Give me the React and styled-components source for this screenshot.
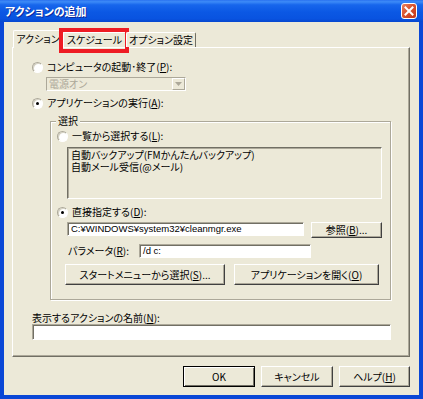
import styled, { createGlobalStyle } from 'styled-components';

const GlobalStyle = createGlobalStyle`
  html, body { margin: 0; padding: 0; }
  body {
    background: #ece9d8;
    font-family: "Noto Sans CJK JP", "Noto Sans", sans-serif;
    font-size: 10px;
    font-feature-settings: "palt";
    color: #000;
  }
  * { box-sizing: border-box; }
`;

function Radio({ checked, children, gap }) {
  return (
    <RadioRow $gap={gap}>
      <RadioMark $checked={checked} />
      <span>{children}</span>
    </RadioRow>
  );
}

export default function App() {
  return (
    <Window>
      <GlobalStyle />
      <TitleBar>
        <Title>アクションの追加</Title>
        <CloseButton>
          <svg width='10' height='10' viewBox='0 0 10 10'>
            <path d='M1.5 1.5 L8.5 8.5 M8.5 1.5 L1.5 8.5' stroke='#fff' strokeWidth='2' strokeLinecap='square' />
          </svg>
        </CloseButton>
      </TitleBar>

      <Body>
        <TabStrip>
          <Tab $active $w={50}>アクション</Tab>
          <Tab $w={63} $highlight>スケジュール</Tab>
          <Tab $w={70}>オプション設定</Tab>
        </TabStrip>

        <Panel>
          <Radio>
            コンピュータの起動･終了(<u>P</u>):
          </Radio>
          <ComboBox>
            <span>電源オン</span>
            <ComboButton>
              <svg width='7' height='4' viewBox='0 0 7 4'>
                <path d='M0 0 H7 L3.5 4 Z' fill='#aca899' />
              </svg>
            </ComboButton>
          </ComboBox>
          <Radio checked>
            アプリケーションの実行(<u>A</u>):
          </Radio>

          <GroupBox>
            <GroupLegend>選択</GroupLegend>
            <Radio gap={3}>
              一覧から選択する(<u>L</u>):
            </Radio>
            <ListBox>
              <ListItem>自動バックアップ(FMかんたんバックアップ)</ListItem>
              <ListItem>自動メール受信(@メール)</ListItem>
            </ListBox>
            <Radio checked gap={7}>
              直接指定する(<u>D</u>):
            </Radio>
            <FieldRow $top={4} $h={16}>
              <TextField $w={237}>C:¥WINDOWS¥system32¥cleanmgr.exe</TextField>
              <PushButton $w={71} $h={16}>参照(<u>B</u>)...</PushButton>
            </FieldRow>
            <FieldRow $top={6} $h={14}>
              <FieldLabel>パラメータ(<u>R</u>):</FieldLabel>
              <TextField $w={172}>/d c:</TextField>
            </FieldRow>
            <FieldRow $top={6} $h={21} $left={8} $gap={9}>
              <PushButton $w={160} $h={21}>スタートメニューから選択(<u>S</u>)...</PushButton>
              <PushButton $w={145} $h={21}>アプリケーションを開く(<u>O</u>)</PushButton>
            </FieldRow>
          </GroupBox>

          <Caption>表示するアクションの名前(<u>N</u>):</Caption>
          <TextField $w={359} $h={16} />
        </Panel>

        <ButtonRow>
          <PushButton $w={72} $h={21} $default>OK</PushButton>
          <PushButton $w={72} $h={21}>キャンセル</PushButton>
          <PushButton $w={71} $h={21}>ヘルプ(<u>H</u>)</PushButton>
        </ButtonRow>
      </Body>
    </Window>
  );
}

const Window = styled.div`
  width: 423px;
  height: 399px;
  display: flex;
  flex-direction: column;
  background: #ece9d8;
`;

const TitleBar = styled.div`
  height: 22px;
  flex: none;
  display: flex;
  align-items: center;
  justify-content: space-between;
  padding: 0 6px 0 5px;
  background: linear-gradient(#2a72f0 0%, #3d8bf7 8%, #1766ec 22%, #0b58e4 55%, #0953e0 85%, #0747cf 100%);
`;

const Title = styled.div`
  color: #fff;
  font-weight: bold;
  font-size: 11px;
  line-height: 12px;
  text-shadow: 1px 1px 0 #0a2a9c;
`;

const CloseButton = styled.div`
  width: 16px;
  height: 16px;
  display: flex;
  align-items: center;
  justify-content: center;
  border: 1px solid #fff;
  border-radius: 3px;
  background: linear-gradient(135deg, #e9825f 0%, #d9532e 45%, #c1361a 100%);
`;

const Body = styled.div`
  flex: 1;
  display: flex;
  flex-direction: column;
  padding: 8px 9px 8px 8px;
  border: 4px solid #0a47d6;
  border-top: none;
  background: #ece9d8;
`;

const TabStrip = styled.div`
  height: 17px;
  display: flex;
  align-items: flex-end;
  padding-left: 1px;
  position: relative;
  z-index: 1;
`;

const Tab = styled.div`
  position: relative;
  width: ${(p) => p.$w}px;
  height: ${(p) => (p.$active ? 18 : 15)}px;
  margin-bottom: ${(p) => (p.$active ? -1 : 0)}px;
  display: flex;
  align-items: center;
  justify-content: center;
  line-height: 12px;
  white-space: nowrap;
  background: #ece9d8;
  border-top: 1px solid #fff;
  border-left: 1px solid #fff;
  border-right: 1px solid #716f64;
  border-radius: 2px 2px 0 0;
  padding-bottom: ${(p) => (p.$active ? 2 : 0)}px;

  ${(p) =>
    p.$highlight &&
    `&::after {
      content: '';
      position: absolute;
      inset: -5px -4px -6px -5px;
      border: 4px solid #ee1c24;
    }`}
`;

const Panel = styled.div`
  height: 310px;
  display: flex;
  flex-direction: column;
  align-items: flex-start;
  padding: 13px 0 0 19px;
  border: 1px solid;
  border-color: #fff #716f64 #716f64 #fff;
  box-shadow: inset -1px -1px 0 #aca899;
`;

const RadioRow = styled.div`
  height: 12px;
  display: flex;
  align-items: center;
  gap: 4px;
  margin-top: ${(p) => p.$gap ?? 6}px;
  line-height: 12px;
  white-space: nowrap;

  &:first-child {
    margin-top: 0;
  }
`;

const RadioMark = styled.span`
  position: relative;
  width: 11px;
  height: 11px;
  flex: none;
  border-radius: 50%;
  background: #fff;
  border: 1px solid;
  border-color: #aca899 #fff #fff #aca899;
  box-shadow: inset 1px 1px 0 #d6d3c4;

  ${(p) =>
    p.$checked &&
    `&::after {
      content: '';
      position: absolute;
      left: 3px;
      top: 3px;
      width: 3px;
      height: 3px;
      border-radius: 50%;
      background: #000;
    }`}
`;

const ComboBox = styled.div`
  width: 140px;
  height: 14px;
  margin: 4px 0 0 14px;
  display: flex;
  align-items: center;
  justify-content: space-between;
  padding-left: 2px;
  color: #aca899;
  line-height: 12px;
  background: #ece9d8;
  border: 1px solid;
  border-color: #aca899 #fff #fff #aca899;
`;

const ComboButton = styled.span`
  width: 13px;
  height: 12px;
  display: flex;
  align-items: center;
  justify-content: center;
  border: 1px solid;
  border-color: #fff #aca899 #aca899 #fff;
`;

const GroupBox = styled.div`
  width: 341px;
  height: 179px;
  margin: 12px 0 0 18px;
  display: flex;
  flex-direction: column;
  align-items: flex-start;
  padding-left: 6px;
  border: 1px solid #aca899;
  box-shadow: 1px 1px 0 #fff, inset 1px 1px 0 #fff;
`;

const GroupLegend = styled.div`
  margin: -7px 0 0 -1px;
  padding: 0 2px;
  line-height: 12px;
  height: 12px;
  background: #ece9d8;
`;

const ListBox = styled.div`
  width: 315px;
  height: 52px;
  margin: 5px 0 0 10px;
  padding: 1px 3px 0;
  white-space: nowrap;
  background: #ece9d8;
  border: 1px solid;
  border-color: #716f64 #fff #fff #716f64;
  box-shadow: inset 1px 1px 0 #aca899;
`;

const ListItem = styled.div`
  height: 12px;
  line-height: 12px;
`;

const FieldRow = styled.div`
  height: ${(p) => p.$h}px;
  margin: ${(p) => p.$top}px 0 0 ${(p) => p.$left ?? 10}px;
  display: flex;
  align-items: center;
  gap: ${(p) => p.$gap ?? 7}px;
`;

const FieldLabel = styled.span`
  width: 65px;
  padding-left: 1px;
  line-height: 12px;
  white-space: nowrap;
`;

const TextField = styled.div`
  width: ${(p) => p.$w}px;
  height: ${(p) => p.$h ?? 14}px;
  align-self: stretch;
  display: flex;
  align-items: center;
  padding-left: 3px;
  line-height: 12px;
  font-family: "Liberation Sans", "Noto Sans CJK JP", sans-serif;
  font-size: 9.5px;
  white-space: nowrap;
  overflow: hidden;
  background: #fff;
  border: 1px solid;
  border-color: #aca899 #fff #fff #aca899;
  box-shadow: inset 1px 1px 0 #716f64;
`;

const PushButton = styled.div`
  width: ${(p) => p.$w}px;
  height: ${(p) => p.$h}px;
  flex: none;
  display: flex;
  align-items: center;
  justify-content: center;
  line-height: 12px;
  white-space: nowrap;
  background: #ece9d8;
  border: 1px solid;
  border-color: ${(p) => (p.$default ? '#000' : '#fff #404040 #404040 #fff')};
  box-shadow: ${(p) =>
    p.$default
      ? 'inset 1px 1px 0 #fff, inset -1px -1px 0 #716f64'
      : 'inset -1px -1px 0 #aca899'};
`;

const Caption = styled.div`
  margin-top: 12px;
  height: 12px;
  line-height: 12px;
  white-space: nowrap;
`;

const ButtonRow = styled.div`
  height: 21px;
  margin-top: 9px;
  display: flex;
  justify-content: flex-end;
  gap: 6px;
`;
